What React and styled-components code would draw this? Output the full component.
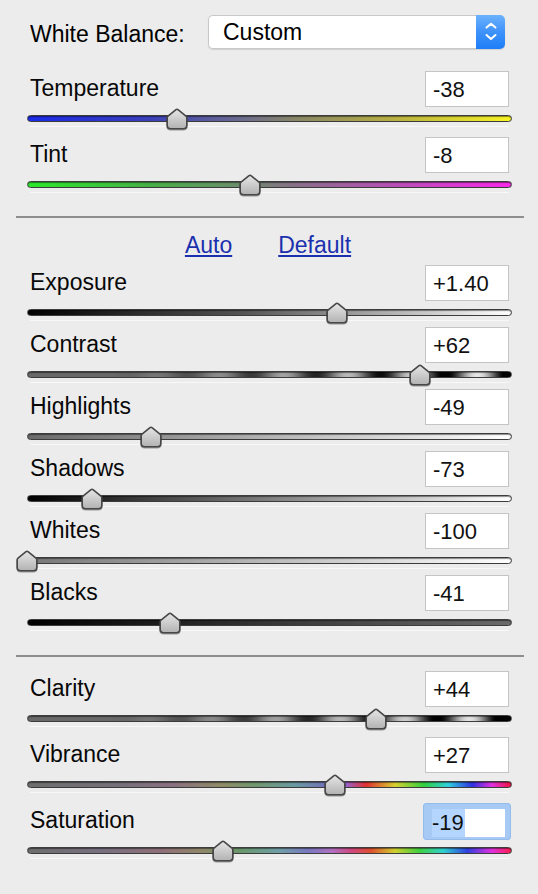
import React from 'react';
import styled, { createGlobalStyle } from 'styled-components';

const GlobalStyle = createGlobalStyle`
  html, body { margin: 0; padding: 0; background: #ececec; }
  body {
    font-family: "Liberation Sans", Arial, Helvetica, sans-serif;
    color: #000;
    -webkit-font-smoothing: antialiased;
  }
`;

const TRACK_W = 485;

function stripes(shift = 0) {
  const stops = [];
  for (let x = 0; x <= TRACK_W; x += 3) {
    const p = 27 + x;
    const amp = Math.max(0, Math.min(1, (p - 115) / 390));
    const v = Math.round(
      Math.max(0, Math.min(250, 104 + 135 * amp * Math.sin((2 * Math.PI * (p - 136.75 - shift)) / 65)))
    );
    stops.push(`rgb(${v},${v},${v}) ${((x / TRACK_W) * 100).toFixed(2)}%`);
  }
  return `linear-gradient(90deg, ${stops.join(', ')})`;
}

const G = {
  temperature: 'linear-gradient(90deg, #1b2ae8 0%, #3a3fba 25%, #6d6d8c 45%, #8a8866 56%, #b9b142 76%, #f8f424 100%)',
  tint: 'linear-gradient(90deg, #2ce82c 0%, #45b045 25%, #6e8a6e 45%, #8a6e8a 56%, #b850b8 76%, #f828e8 100%)',
  exposure: 'linear-gradient(90deg, #000 0%, #555 45%, #fff 100%)',
  highlights: 'linear-gradient(90deg, #6a6a6a 0%, #fff 100%)',
  shadows: 'linear-gradient(90deg, #000 0%, #fff 100%)',
  whites: 'linear-gradient(90deg, #777 0%, #fff 100%)',
  blacks: 'linear-gradient(90deg, #000 0%, #6a6a6a 100%)',
  vibrance:
    'linear-gradient(90deg, #6e6e6e 0%, #747078 18%, #8a7080 30%, #8f8a66 40%, #70966e 47%, #6a9aa0 55%, #7070b8 62%, #9a60c8 66%, #e03030 70%, #d8d030 76%, #30d040 82%, #30d0e0 87%, #3030e0 92%, #e030e0 96%, #f01040 100%)',
  saturation:
    'linear-gradient(90deg, #6e6e6e 0%, #787080 15%, #907078 28%, #90886a 36%, #6a986c 44%, #70a0a8 52%, #7878c0 58%, #b070c0 63%, #d04880 67%, #e05030 71%, #d0d030 76%, #40d040 81%, #30d0d0 86%, #3040e0 91%, #e030e0 96%, #ff2050 100%)',
};

const whiteBalance = [
  { label: 'Temperature', text: '-38', v: -38, bg: G.temperature },
  { label: 'Tint', text: '-8', v: -8, bg: G.tint },
];

const basic = [
  { label: 'Exposure', text: '+1.40', v: 1.4, min: -5, max: 5, bg: G.exposure },
  { label: 'Contrast', text: '+62', v: 62, bg: stripes(0) },
  { label: 'Highlights', text: '-49', v: -49, bg: G.highlights },
  { label: 'Shadows', text: '-73', v: -73, bg: G.shadows },
  { label: 'Whites', text: '-100', v: -100, bg: G.whites },
  { label: 'Blacks', text: '-41', v: -41, bg: G.blacks },
];

const presence = [
  { label: 'Clarity', text: '+44', v: 44, bg: stripes(-8) },
  { label: 'Vibrance', text: '+27', v: 27, bg: G.vibrance },
  { label: 'Saturation', text: '-19', v: -19, bg: G.saturation, focused: true },
];

const Panel = styled.div`
  width: 538px;
  min-height: 894px;
  background: #ececec;
  display: flex;
  flex-direction: column;
`;

const Section = styled.section`
  display: flex;
  flex-direction: column;
  gap: ${(p) => p.$gap}px;
  padding-top: ${(p) => p.$top}px;
`;

const Separator = styled.hr`
  margin: ${(p) => p.$mt}px 0 0 16px;
  width: 508px;
  height: 2px;
  border: 0;
  background: #8e8e8e;
`;

const WBRow = styled.div`
  display: flex;
  align-items: center;
  justify-content: space-between;
  height: 34px;
  padding: 0 33px 0 30px;
  margin-bottom: 18px;
`;

const WBLabel = styled.span`
  font-size: 23px;
  margin-top: 4px;
`;

const Select = styled.div`
  width: 297px;
  height: 34px;
  display: flex;
  border-radius: 5px;
  box-shadow: 0 1px 1px rgba(0, 0, 0, 0.12);
`;

const SelectText = styled.span`
  flex: 1;
  box-sizing: border-box;
  border: 1px solid #c8c8c8;
  border-right: 0;
  border-radius: 5px 0 0 5px;
  background: #fff;
  font-size: 23px;
  line-height: 32px;
  padding-left: 14px;
`;

const SelectArrow = styled.div`
  width: 29px;
  border-radius: 0 5px 5px 0;
  background: linear-gradient(180deg, #6cb2fd 0%, #3d92fa 50%, #1e7ef7 100%);
  display: flex;
  align-items: center;
  justify-content: center;
`;

const Links = styled.div`
  display: flex;
  justify-content: center;
  gap: 46px;
  height: 23px;
  margin: 16px 0 8px;
  padding-right: 2px;
`;

const Link = styled.a`
  font-size: 23px;
  line-height: 23px;
  color: #1b30ae;
  text-decoration: underline;
  text-decoration-thickness: 1.5px;
  text-underline-offset: 2px;
  cursor: pointer;
`;

const Row = styled.div`
  display: flex;
  flex-direction: column;
  height: 62px;
`;

const Header = styled.div`
  display: flex;
  align-items: flex-start;
  justify-content: space-between;
  height: 36px;
  padding: 0 29px 0 30px;
`;

const Label = styled.span`
  font-size: 23px;
  line-height: 34px;
  color: #080808;
`;

const ValueBox = styled.div`
  width: 84px;
  height: 36px;
  box-sizing: border-box;
  background: #fff;
  border: 1px solid #c4c4c4;
  font-size: 22px;
  line-height: 34px;
  padding: 1px 0 0 7px;
  color: #111;
`;

const FocusBox = styled.div`
  width: 88px;
  height: 37px;
  margin-right: -2px;
  box-sizing: border-box;
  padding: 6px 6px 3px 9px;
  border-radius: 4px;
  background: #a7caf5;
  box-shadow: inset 0 0 0 1px #93bced;
  display: flex;
`;

const FocusInner = styled.div`
  flex: 1;
  background: #fff;
  font-size: 22px;
  line-height: 28px;
  color: #111;
`;

const Selection = styled.span`
  display: inline-block;
  background: #b4d6fe;
  padding-right: 1px;
`;

const SliderArea = styled.div`
  padding: 8px 26px 0 27px;
`;

const TrackWrap = styled.div`
  position: relative;
  width: ${TRACK_W}px;
  height: 7px;
`;

const Track = styled.div`
  height: 7px;
  box-sizing: border-box;
  border: 1px solid #3c3c3c;
  border-radius: 4px;
  background: ${(p) => p.$bg};
  box-shadow: inset 0 1px 1px rgba(0, 0, 0, 0.45), 0 8px 0 -3px #f8f8f8;
`;

const ThumbSvg = styled.svg`
  position: absolute;
  top: -7px;
  margin-left: -11px;
  width: 22px;
  height: 23px;
  filter: drop-shadow(0 1px 0.6px rgba(0, 0, 0, 0.35));
`;

function Thumb({ f }) {
  return (
    <ThumbSvg viewBox="0 0 22 23" style={{ left: `${f * 100}%` }}>
      <defs>
        <linearGradient id="thumbFill" x1="0" y1="0" x2="0" y2="1">
          <stop offset="0" stopColor="#e6e6e6" />
          <stop offset="1" stopColor="#b2b2b2" />
        </linearGradient>
      </defs>
      <path
        d="M11 1.2 Q11.6 1.2 12.3 1.8 L20 8.2 Q20.8 8.8 20.8 9.8 L20.8 17.3 Q20.8 20.8 17.3 20.8 L4.7 20.8 Q1.2 20.8 1.2 17.3 L1.2 9.8 Q1.2 8.8 2 8.2 L9.7 1.8 Q10.4 1.2 11 1.2 Z"
        fill="url(#thumbFill)"
        stroke="#474747"
        strokeWidth="1.6"
        strokeLinejoin="round"
      />
    </ThumbSvg>
  );
}

function Slider({ item }) {
  const min = item.min ?? -100;
  const max = item.max ?? 100;
  const f = (item.v - min) / (max - min);
  return (
    <Row>
      <Header>
        <Label>{item.label}</Label>
        {item.focused ? (
          <FocusBox>
            <FocusInner>
              <Selection>{item.text}</Selection>
            </FocusInner>
          </FocusBox>
        ) : (
          <ValueBox>{item.text}</ValueBox>
        )}
      </Header>
      <SliderArea>
        <TrackWrap>
          <Track $bg={item.bg} />
          <Thumb f={f} />
        </TrackWrap>
      </SliderArea>
    </Row>
  );
}

function Chevrons() {
  return (
    <svg width="12" height="20" viewBox="0 0 12 20">
      <path d="M1.5 5.6 L6 1.7 L10.5 5.6" fill="none" stroke="#fff" strokeWidth="2" strokeLinecap="round" strokeLinejoin="round" />
      <path d="M1.5 13 L6 17 L10.5 13" fill="none" stroke="#fff" strokeWidth="2" strokeLinecap="round" strokeLinejoin="round" />
    </svg>
  );
}

export default function App() {
  return (
    <>
      <GlobalStyle />
      <Panel>
        <Section $gap={4} $top={15}>
          <WBRow>
            <WBLabel>White Balance:</WBLabel>
            <Select>
              <SelectText>Custom</SelectText>
              <SelectArrow>
                <Chevrons />
              </SelectArrow>
            </Select>
          </WBRow>
          {whiteBalance.map((it) => (
            <Slider key={it.label} item={it} />
          ))}
        </Section>
        <Separator $mt={17} />
        <Section $gap={0} $top={0}>
          <Links>
            <Link>Auto</Link>
            <Link>Default</Link>
          </Links>
          {basic.map((it) => (
            <Slider key={it.label} item={it} />
          ))}
        </Section>
        <Separator $mt={18} />
        <Section $gap={4} $top={14}>
          {presence.map((it) => (
            <Slider key={it.label} item={it} />
          ))}
        </Section>
      </Panel>
    </>
  );
}
